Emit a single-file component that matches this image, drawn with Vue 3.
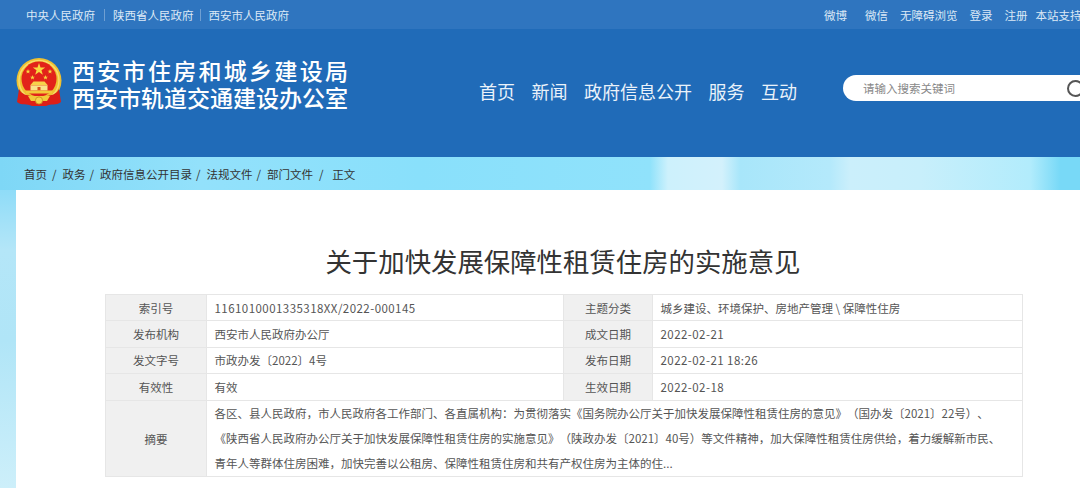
<script setup>
const leftLinks = ['中央人民政府', '陕西省人民政府', '西安市人民政府']
const navItems = ['首页', '新闻', '政府信息公开', '服务', '互动']
const crumbs = ['首页', '政务', '政府信息公开目录', '法规文件', '部门文件', '正文']

const rows = [
  ['索引号', '1161010001335318XX/2022-000145', '主题分类', '城乡建设、环境保护、房地产管理 \\ 保障性住房'],
  ['发布机构', '西安市人民政府办公厅', '成文日期', '2022-02-21'],
  ['发文字号', '市政办发〔2022〕4号', '发布日期', '2022-02-21 18:26'],
  ['有效性', '有效', '生效日期', '2022-02-18']
]

const summary = [
  '各区、县人民政府，市人民政府各工作部门、各直属机构：为贯彻落实《国务院办公厅关于加快发展保障性租赁住房的意见》（国办发〔2021〕22号）、',
  '《陕西省人民政府办公厅关于加快发展保障性租赁住房的实施意见》（陕政办发〔2021〕40号）等文件精神，加大保障性租赁住房供给，着力缓解新市民、',
  '青年人等群体住房困难，加快完善以公租房、保障性租赁住房和共有产权住房为主体的住...'
]

// latin only values sit a bit wider in the original
function isNum(v) {
  return /^[\x00-\x7f]+$/.test(v)
}

// five pointed star for the emblem
function star(cx, cy, r) {
  const pts = []
  for (let i = 0; i < 10; i++) {
    const rad = i % 2 === 0 ? r : r * 0.4
    const a = (Math.PI / 5) * i - Math.PI / 2
    pts.push((cx + rad * Math.cos(a)).toFixed(2) + ',' + (cy + rad * Math.sin(a)).toFixed(2))
  }
  return pts.join(' ')
}

const smallStars = [
  [12, 13.5],
  [16.5, 19.5],
  [29.5, 19.5],
  [34, 13.5]
]
</script>

<template>
  <div class="page">
    <div class="topbar">
      <div class="top-left">
        <template v-for="(link, i) in leftLinks" :key="link">
          <span v-if="i > 0" class="sep"></span>
          <a>{{ link }}</a>
        </template>
      </div>
      <div class="top-right">
        <a>微博</a>
        <span class="sep"></span>
        <a>微信</a>
        <a class="r-access">无障碍浏览</a>
        <a class="r-login">登录</a>
        <a class="r-reg">注册</a>
        <a class="r-support">本站支持</a>
      </div>
    </div>

    <div class="header">
      <svg class="emblem" viewBox="0 0 46 50" width="46" height="50">
        <circle cx="23" cy="22.5" r="22.5" fill="#efc130" />
        <circle cx="23" cy="22.5" r="20" fill="none" stroke="#f8dc6a" stroke-width="1.5" />
        <circle cx="23" cy="21" r="17.5" fill="#e2231a" />
        <polygon :points="star(23, 11.5, 6.5)" fill="#f9d83f" />
        <polygon v-for="s in smallStars" :key="s[0]" :points="star(s[0], s[1], 2.6)" fill="#f9d83f" />
        <path d="M14 27.5 L17.5 23.5 H28.5 L32 27.5 Z" fill="#f7d24a" />
        <rect x="14.5" y="27.5" width="17" height="5" fill="#f9e38a" />
        <rect x="21.5" y="29" width="3" height="3.5" fill="#d9501e" />
        <rect x="10" y="32.5" width="26" height="3" fill="#f2c93a" />
        <path d="M3 31 C6 37 11 37 15 38 H31 C35 37 40 37 43 31 L45 44 C40 48 35 45 30 48 H16 C11 45 6 48 1 44 Z" fill="#dd1f17" />
        <path d="M12 38 H34 L31 43 H15 Z" fill="#f2c93a" />
        <circle cx="23" cy="42.5" r="3.6" fill="#f7d24a" stroke="#c9871c" stroke-width="0.8" />
      </svg>
      <div class="org">
        <div class="org-a">西安市住房和城乡建设局</div>
        <div class="org-b">西安市轨道交通建设办公室</div>
      </div>
      <nav class="nav">
        <a v-for="item in navItems" :key="item">{{ item }}</a>
      </nav>
      <div class="search">
        <span class="placeholder">请输入搜索关键词</span>
        <span class="lens"></span>
      </div>
    </div>

    <div class="crumbs">
      <template v-for="(c, i) in crumbs" :key="c">
        <span v-if="i > 0" class="slash">/</span>
        <a>{{ c }}</a>
      </template>
    </div>

    <div class="card">
      <h1 class="title">关于加快发展保障性租赁住房的实施意见</h1>
      <table class="info">
        <colgroup>
          <col class="c1" />
          <col class="c2" />
          <col class="c3" />
          <col />
        </colgroup>
        <tbody>
          <tr v-for="row in rows" :key="row[0]">
            <th>{{ row[0] }}</th>
            <td :class="{ num: isNum(row[1]) }">{{ row[1] }}</td>
            <th>{{ row[2] }}</th>
            <td :class="{ num: isNum(row[3]) }">{{ row[3] }}</td>
          </tr>
          <tr class="summary">
            <th>摘要</th>
            <td colspan="3">
              <div v-for="line in summary" :key="line" class="line">{{ line }}</div>
            </td>
          </tr>
        </tbody>
      </table>
    </div>
  </div>
</template>

<style>
html,
body {
  margin: 0;
  height: 100%;
  overflow: hidden;
}
</style>

<style scoped>
.page {
  width: 1080px;
  height: 488px;
  overflow: hidden;
  display: flex;
  flex-direction: column;
  font-family: "Noto Sans CJK SC", "Noto Sans", sans-serif;
  text-spacing-trim: space-all;
  background: linear-gradient(180deg, #8fdcf8 190px, #b4e6f8 250px, #b0e5f7 340px, #cdeffa 488px);
}

.topbar {
  height: 29px;
  flex-shrink: 0;
  background: #2f75bf;
  color: #dce9f6;
  font-size: 11.5px;
  display: flex;
  align-items: center;
  justify-content: space-between;
}
.top-left {
  display: flex;
  align-items: center;
  padding-left: 26px;
}
.top-left .sep {
  margin: 0 8px 0 9px;
}
.top-left .sep:nth-of-type(2) {
  margin-left: 6px;
}
.sep {
  width: 1px;
  height: 12px;
  background: #6f9fd2;
}
.top-right {
  display: flex;
  align-items: center;
  width: 256px;
  flex-shrink: 0;
  white-space: nowrap;
}
.top-right .sep {
  margin: 0 9px;
}
.r-access,
.r-login,
.r-reg {
  margin-left: 12px;
}
.r-support {
  margin-left: 8px;
}

.header {
  height: 128px;
  flex-shrink: 0;
  background: #206bb8;
  box-sizing: border-box;
  padding: 29px 0 0 16px;
  display: flex;
  align-items: flex-start;
}
.emblem {
  flex-shrink: 0;
}
.org {
  width: 276px;
  flex-shrink: 0;
  margin: 1px 0 0 10px;
  color: #fff;
  font-family: "Liberation Sans", "Noto Sans CJK SC", sans-serif;
  font-weight: 500;
  line-height: 27px;
  white-space: nowrap;
}
.org-a {
  font-size: 23px;
  letter-spacing: 2.3px;
}
.org-b {
  font-size: 23px;
}
.nav {
  display: flex;
  gap: 16.5px;
  margin: 18px 0 0 131px;
  color: #eaf2fa;
  font-size: 18px;
  line-height: 30px;
  white-space: nowrap;
}
.search {
  flex-shrink: 0;
  width: 260px;
  height: 26px;
  margin: 17px 0 0 46px;
  border-radius: 13px;
  background: #fff;
  display: flex;
  align-items: center;
  padding-left: 20px;
  box-sizing: border-box;
  position: relative;
}
.placeholder {
  font-size: 11.5px;
  color: #888;
}
.lens {
  position: absolute;
  left: 224px;
  top: 5px;
  width: 13px;
  height: 13px;
  border: 2px solid #555;
  border-radius: 50%;
}

.crumbs {
  height: 33px;
  flex-shrink: 0;
  padding-left: 24px;
  display: flex;
  align-items: center;
  font-size: 11.5px;
  color: #333;
  white-space: nowrap;
  background: linear-gradient(90deg, #7ed7f6 0, #93e1fb 200px, #89e0fb 420px, #90e2fb 650px, #cdf1fc 668px, #d3f1fc 722px, #a8e6fa 740px, #b4e9fb 830px, #cbeffb 850px, #c8effb 920px, #b2ecfc 1030px, #78d9f7 1060px);
}
.slash {
  margin: 0 6px 0 4px;
}
.slash:first-of-type {
  margin-left: 5px;
}
.slash:last-of-type {
  margin: 0 8.7px 0 6px;
}

.card {
  flex: 1;
  margin-left: 16px;
  background: #fff;
  display: flex;
  flex-direction: column;
}
.title {
  margin: 52px 0 0 47px;
  font-size: 26.4px;
  line-height: 38px;
  font-weight: 400;
  color: #333;
  text-align: center;
  width: 1000px;
  white-space: nowrap;
}

.info {
  margin: 14px 0 0 89px;
  width: 918px;
  table-layout: fixed;
  border-collapse: collapse;
  font-size: 11.5px;
  color: #555;
}
.c1 {
  width: 101px;
}
.c2 {
  width: 357px;
}
.c3 {
  width: 89px;
}
.info th,
.info td {
  border: 1px solid #e6e6e6;
  height: 26.4px;
  padding: 0;
  box-sizing: border-box;
  line-height: 16px;
}
.info th {
  background: #f0f0f0;
  font-weight: 400;
  text-align: center;
}
.info td {
  padding-left: 7.5px;
  white-space: nowrap;
  overflow: hidden;
}
.info td.num {
  letter-spacing: 0.45px;
}
.summary td {
  height: 76px;
}
.line {
  line-height: 25.3px;
}
</style>
